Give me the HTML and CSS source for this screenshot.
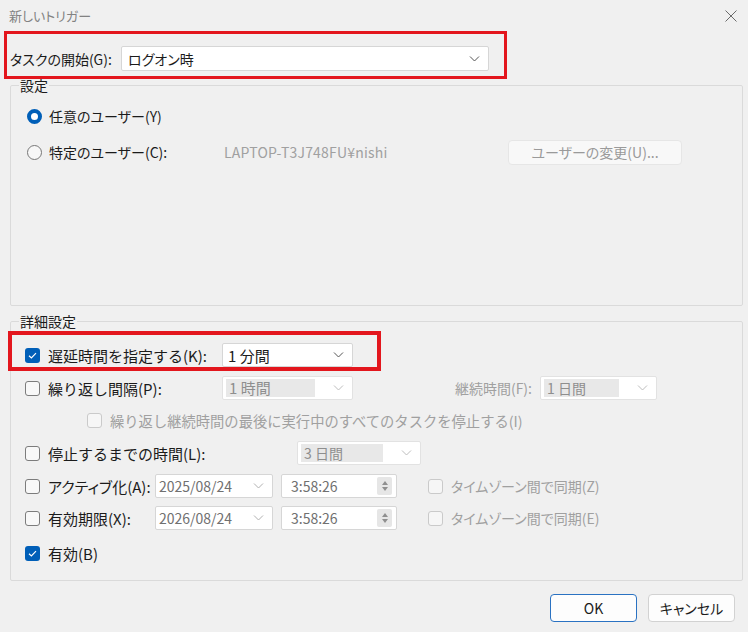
FILE: index.html
```html
<!DOCTYPE html>
<html lang="ja">
<head>
  <meta charset="UTF-8" />
  <title>新しいトリガー</title>
  <link rel="stylesheet" href="styles.css">
</head>
<body>

<div class="titlebar">
  <span class="title">新しいトリガー</span>
  <svg class="close" viewBox="0 0 12 12"><path d="M0.5 0.5 L11.5 11.5 M11.5 0.5 L0.5 11.5" /></svg>
</div>

<div class="start mark">
  <span class="start-label">タスクの開始(G):</span>
  <div class="select start-select">
    <span>ログオン時</span>
    <svg class="chev" viewBox="0 0 10 6"><path d="M0.5 0.5 L5 5 L9.5 0.5" /></svg>
  </div>
</div>

<fieldset class="group settings">
  <legend>設定</legend>
  <div class="row">
    <span class="radio on"></span>
    <span>任意のユーザー(Y)</span>
  </div>
  <div class="row">
    <span class="radio"></span>
    <span class="user-label">特定のユーザー(C):</span>
    <span class="user-name">LAPTOP-T3J748FU¥nishi</span>
    <button class="btn change" disabled>ユーザーの変更(U)...</button>
  </div>
</fieldset>

<fieldset class="group advanced">
  <legend>詳細設定</legend>

  <div class="row delay mark">
    <span class="cb on"><svg viewBox="0 0 15 15"><path d="M4 7.8 L6.4 10 L11 5.2" /></svg></span>
    <span class="label">遅延時間を指定する(K):</span>
    <div class="select small">
      <span>1 分間</span>
      <svg class="chev" viewBox="0 0 10 6"><path d="M0.5 0.5 L5 5 L9.5 0.5" /></svg>
    </div>
  </div>

  <div class="row r-repeat">
    <span class="cb"></span>
    <span class="label">繰り返し間隔(P):</span>
    <div class="select small off">
      <span class="hl">1 時間</span>
      <svg class="chev" viewBox="0 0 10 6"><path d="M0.5 0.5 L5 5 L9.5 0.5" /></svg>
    </div>
    <span class="dur-label">継続時間(F):</span>
    <div class="select dur off">
      <span class="hl">1 日間</span>
      <svg class="chev" viewBox="0 0 10 6"><path d="M0.5 0.5 L5 5 L9.5 0.5" /></svg>
    </div>
  </div>

  <div class="row r-stopall">
    <span class="cb off"></span>
    <span class="muted">繰り返し継続時間の最後に実行中のすべてのタスクを停止する(I)</span>
  </div>

  <div class="row r-stop">
    <span class="cb"></span>
    <span class="label wide">停止するまでの時間(L):</span>
    <div class="select stop off">
      <span class="hl">3 日間</span>
      <svg class="chev" viewBox="0 0 10 6"><path d="M0.5 0.5 L5 5 L9.5 0.5" /></svg>
    </div>
  </div>

  <div class="row r-date">
    <span class="cb"></span>
    <span class="label narrow">アクティブ化(A):</span>
    <div class="select date">
      <span>2025/08/24</span>
      <svg class="chev" viewBox="0 0 10 6"><path d="M0.5 0.5 L5 5 L9.5 0.5" /></svg>
    </div>
    <div class="select time">
      <span>3:58:26</span>
      <span class="spin">
        <svg viewBox="0 0 8 14"><path d="M4 2 L7 6 L1 6 Z M4 12 L7 8 L1 8 Z" /></svg>
      </span>
    </div>
    <span class="cb off tz-cb"></span>
    <span class="muted tz">タイムゾーン間で同期(Z)</span>
  </div>

  <div class="row r-date">
    <span class="cb"></span>
    <span class="label narrow">有効期限(X):</span>
    <div class="select date">
      <span>2026/08/24</span>
      <svg class="chev" viewBox="0 0 10 6"><path d="M0.5 0.5 L5 5 L9.5 0.5" /></svg>
    </div>
    <div class="select time">
      <span>3:58:26</span>
      <span class="spin">
        <svg viewBox="0 0 8 14"><path d="M4 2 L7 6 L1 6 Z M4 12 L7 8 L1 8 Z" /></svg>
      </span>
    </div>
    <span class="cb off tz-cb"></span>
    <span class="muted tz">タイムゾーン間で同期(E)</span>
  </div>

  <div class="row r-enabled">
    <span class="cb on"><svg viewBox="0 0 15 15"><path d="M4 7.8 L6.4 10 L11 5.2" /></svg></span>
    <span>有効(B)</span>
  </div>
</fieldset>

<div class="footer">
  <button class="btn ok">OK</button>
  <button class="btn">キャンセル</button>
</div>

</body>
</html>
```

FILE: styles.css
```css
:root {
  --bg: #f0f0f0;
  --text: #1b1b1b;
  --muted: #a0a0a0;
  --line: #dadada;
  --accent: #005fb8;
  --red: #e3161d;
}

* {
  box-sizing: border-box;
  margin: 0;
  padding: 0;
}

body {
  width: 748px;
  height: 632px;
  overflow: hidden;
  background: var(--bg);
  color: var(--text);
  font-family: "Noto Sans CJK JP", "Noto Sans", sans-serif;
  font-size: 15px;
  white-space: nowrap;
}

/* title bar */
.titlebar {
  height: 31px;
  display: flex;
  align-items: center;
  justify-content: space-between;
  padding: 0 11px 0 9px;
}

.title {
  font-size: 13px;
  color: #828282;
  font-feature-settings: "palt";
}

.close {
  width: 12px;
  height: 12px;
  stroke: #6a6a6a;
  stroke-width: 1;
  fill: none;
}

.mark {
  border: 3px solid var(--red);
}

/* task start */
.start {
  margin-left: 4px;
  width: 503px;
  height: 48px;
  display: flex;
  align-items: center;
  padding: 7px 0 0 3px;
}

.start-label {
  width: 111px;
  font-size: 14px;
  font-feature-settings: "palt";
}

/* combo boxes */
.select {
  height: 24px;
  display: flex;
  align-items: center;
  justify-content: space-between;
  background: #fff;
  border: 1px solid #d6d6d6;
  border-radius: 2px;
  padding: 0 8px 0 5px;
  font-size: 14px;
  flex: none;
}

.chev {
  width: 11px;
  height: 6px;
  stroke: #555;
  stroke-width: 1;
  fill: none;
  flex: none;
}

.start-select {
  width: 368px;
  height: 25px;
  padding-left: 6px;
  font-feature-settings: "palt";
}

.select.small {
  width: 131px;
  font-size: 15px;
}

.select.off {
  color: #8e8e8e;
  padding-left: 3px;
  border-color: #e2e2e2;
}

.select.off .hl {
  background: #e8e8e8;
  height: 18px;
  line-height: 18px;
  padding-left: 3px;
  flex: 1;
  margin-right: 18px;
}

.select.off .chev {
  stroke: #bdbdbd;
}

.select.dur {
  width: 117px;
}

.select.stop {
  width: 124px;
}

.select.date {
  width: 118px;
  color: #707070;
  font-size: 14px;
  padding-left: 3px;
}

.select.date .chev {
  stroke: #b0b0b0;
}

.select.time {
  width: 116px;
  margin-left: 8px;
  color: #707070;
  padding: 0 4px 0 9px;
}

.spin {
  width: 15px;
  height: 18px;
  background: #e6e6e6;
  border-radius: 2px;
  display: flex;
  align-items: center;
  justify-content: center;
}

.spin svg {
  width: 8px;
  height: 14px;
  fill: #8f8f8f;
}

/* group boxes */
.group {
  margin: 0 5px 0 10px;
  border: 1px solid var(--line);
  border-radius: 2px;
  min-width: 0;
}

.group legend {
  margin-left: 8px;
  padding: 0 1px;
  font-size: 14px;
  line-height: 13px;
}

.settings {
  height: 227px;
  padding: 6px 0 0 0;
}

.advanced {
  margin-top: 8px;
  height: 267px;
  padding: 3px 0 0 0;
}

.advanced legend {
  line-height: 14px;
}

.row {
  display: flex;
  align-items: center;
}

.settings .row {
  height: 36px;
  padding-left: 16px;
  font-size: 14px;
  font-feature-settings: "palt";
}

.radio {
  width: 15px;
  height: 15px;
  border-radius: 50%;
  border: 1px solid #777;
  background: #f7f7f7;
  margin-right: 7px;
  flex: none;
}

.radio.on {
  border: 4.5px solid var(--accent);
  background: #fff;
}

.user-label {
  width: 175px;
}

.user-name {
  width: 284px;
  color: var(--muted);
  font-size: 14px;
  letter-spacing: 0.2px;
}

.btn {
  font-family: inherit;
  font-size: 14px;
  background: #fdfdfd;
  border: 1px solid #d2d2d2;
  border-radius: 4px;
  color: var(--text);
  font-feature-settings: "palt";
}

.btn.change {
  width: 174px;
  height: 25px;
  background: #f8f8f8;
  border-color: #e6e6e6;
  color: #9a9a9a;
}

/* advanced rows */
.advanced .row {
  padding-left: 14px;
  height: 32px;
}

.cb {
  width: 15px;
  height: 15px;
  border: 1px solid #7c7c7c;
  border-radius: 3px;
  background: #f8f8f8;
  margin-right: 8px;
  flex: none;
}

.cb.on {
  border: none;
  background: var(--accent);
}

.cb svg {
  display: block;
  width: 15px;
  height: 15px;
  stroke: #fff;
  stroke-width: 1.2;
  fill: none;
}

.cb.off {
  border-color: #cacaca;
  background: #f6f6f6;
}

.label {
  width: 174px;
  flex: none;
}

.label.wide {
  width: 249px;
}

.label.narrow {
  width: 107px;
  font-feature-settings: "palt";
}

.muted {
  color: var(--muted);
}

.advanced .row.delay {
  margin-left: -3px;
  width: 373px;
  height: 40px;
  border-width: 4px;
  padding: 8px 0 0 13px;
}

.advanced .row.r-repeat {
  height: 34px;
}

.dur-label {
  width: 187px;
  text-align: right;
  padding-right: 8px;
  color: var(--muted);
  font-size: 14px;
  flex: none;
}

.advanced .row.r-stopall {
  height: 31px;
  padding-left: 76px;
}

.r-stopall .muted {
  font-size: 14.3px;
}

.advanced .row.r-stop {
  height: 34px;
}

.tz-cb {
  margin-left: 31px;
}

.tz {
  font-size: 14px;
  font-feature-settings: "palt";
}

.advanced .row.r-enabled {
  margin-top: 2px;
  height: 34px;
}

/* footer */
.footer {
  display: flex;
  justify-content: flex-end;
  gap: 11px;
  margin-top: 13px;
  padding-right: 13px;
}

.footer .btn {
  width: 87px;
  height: 28px;
}

.footer .ok {
  border: 1.5px solid #2a72c2;
}
```
